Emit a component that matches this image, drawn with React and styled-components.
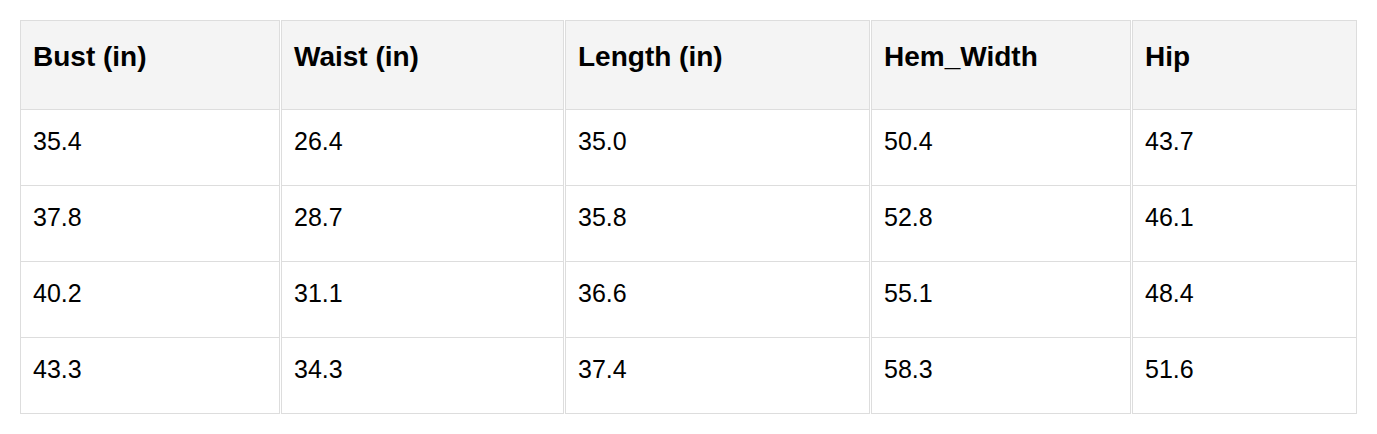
import React from 'react';
import styled, { createGlobalStyle } from 'styled-components';

const columns = [
  { label: 'Bust (in)', width: 260 },
  { label: 'Waist (in)', width: 283 },
  { label: 'Length (in)', width: 305 },
  { label: 'Hem_Width', width: 260 },
  { label: 'Hip', width: 225 },
];

const rows = [
  ['35.4', '26.4', '35.0', '50.4', '43.7'],
  ['37.8', '28.7', '35.8', '52.8', '46.1'],
  ['40.2', '31.1', '36.6', '55.1', '48.4'],
  ['43.3', '34.3', '37.4', '58.3', '51.6'],
];

export default function App() {
  return (
    <>
      <GlobalStyle />
      <Page>
        <SizeTable>
          <colgroup>
            {columns.map((c) => (
              <col key={c.label} style={{ width: c.width }} />
            ))}
          </colgroup>
          <thead>
            <tr>
              {columns.map((c) => (
                <HeadCell key={c.label}>{c.label}</HeadCell>
              ))}
            </tr>
          </thead>
          <tbody>
            {rows.map((row, i) => (
              <tr key={i}>
                {row.map((value, j) => (
                  <Cell key={j}>{value}</Cell>
                ))}
              </tr>
            ))}
          </tbody>
        </SizeTable>
      </Page>
    </>
  );
}

const GlobalStyle = createGlobalStyle`
  html, body {
    margin: 0;
    padding: 0;
    background: #ffffff;
  }
  body {
    font-family: "Liberation Sans", Arial, sans-serif;
    color: #000;
  }
`;

const Page = styled.div`
  padding: 20px;
`;

const SizeTable = styled.table`
  width: 100%;
  table-layout: fixed;
  border-collapse: separate;
  border-spacing: 1px 0;
  margin: 0 -1px;
  width: calc(100% + 2px);
`;

const HeadCell = styled.th`
  box-sizing: border-box;
  height: 90px;
  padding: 20px 12px 36px;
  text-align: left;
  vertical-align: top;
  font-size: 28px;
  font-weight: bold;
  line-height: 32px;
  background: #f4f4f4;
  border: 1px solid #dddddd;
`;

const Cell = styled.td`
  box-sizing: border-box;
  height: 76px;
  padding: 17px 12px 29px;
  text-align: left;
  vertical-align: top;
  font-size: 25px;
  line-height: 29px;
  border: 1px solid #dddddd;
  border-top: 0;
`;
